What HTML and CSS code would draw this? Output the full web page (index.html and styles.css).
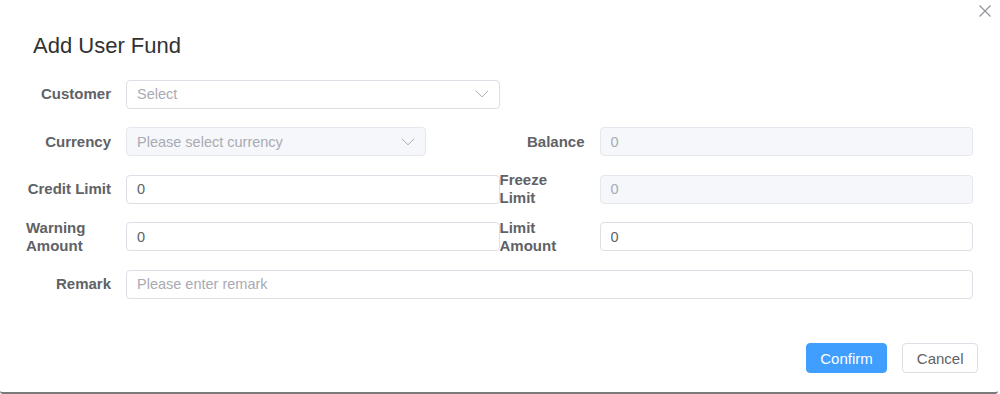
FILE: index.html
```html
<!DOCTYPE html>
<html lang="en">
<head>
    <meta charset="UTF-8">
    <meta name="viewport" content="width=device-width, initial-scale=1.0">
    <title>Add User Fund</title>
    <link rel="stylesheet" href="styles.css">
</head>
<body>

<div class="dialog">
    <div class="dialog-header">
        <span class="dialog-title">Add User Fund</span>
        <button type="button" class="dialog-close" aria-label="Close">
            <svg width="12" height="12" viewBox="0 0 12 12"><path d="M0.5 0.5 L11.5 11.5 M11.5 0.5 L0.5 11.5" stroke="#909399" stroke-width="1.2" fill="none"/></svg>
        </button>
    </div>

    <form class="dialog-body" id="fundForm">
        <!-- Customer -->
        <div class="form-row">
            <div class="form-item">
                <label class="form-label">Customer</label>
                <div class="form-control">
                    <div class="select">
                        <span class="placeholder">Select</span>
                        <svg class="arrow" width="14" height="8" viewBox="0 0 14 8"><path d="M0.8 0.8 L7 6.8 L13.2 0.8" stroke="#a8abb2" stroke-width="1" fill="none"/></svg>
                    </div>
                </div>
            </div>
            <div class="form-item"></div>
        </div>

        <!-- Currency / Balance -->
        <div class="form-row">
            <div class="form-item">
                <label class="form-label">Currency</label>
                <div class="form-control">
                    <div class="select disabled currency">
                        <span class="placeholder">Please select currency</span>
                        <svg class="arrow" width="14" height="8" viewBox="0 0 14 8"><path d="M0.8 0.8 L7 6.8 L13.2 0.8" stroke="#a8abb2" stroke-width="1" fill="none"/></svg>
                    </div>
                </div>
            </div>
            <div class="form-item">
                <label class="form-label">Balance</label>
                <div class="form-control">
                    <input type="text" class="input" value="0" disabled>
                </div>
            </div>
        </div>

        <!-- Credit Limit / Freeze Limit -->
        <div class="form-row">
            <div class="form-item">
                <label class="form-label">Credit Limit</label>
                <div class="form-control">
                    <input type="text" class="input" value="0">
                </div>
            </div>
            <div class="form-item">
                <label class="form-label">Freeze Limit</label>
                <div class="form-control">
                    <input type="text" class="input" value="0" disabled>
                </div>
            </div>
        </div>

        <!-- Warning Amount / Limit Amount -->
        <div class="form-row">
            <div class="form-item">
                <label class="form-label">Warning Amount</label>
                <div class="form-control">
                    <input type="text" class="input" value="0">
                </div>
            </div>
            <div class="form-item">
                <label class="form-label">Limit Amount</label>
                <div class="form-control">
                    <input type="text" class="input" value="0">
                </div>
            </div>
        </div>

        <!-- Remark -->
        <div class="form-row">
            <div class="form-item full">
                <label class="form-label">Remark</label>
                <div class="form-control">
                    <input type="text" class="input" placeholder="Please enter remark">
                </div>
            </div>
        </div>
    </form>

    <div class="dialog-footer">
        <button type="button" class="btn btn-primary">Confirm</button>
        <button type="button" class="btn">Cancel</button>
    </div>
</div>

</body>
</html>
```

FILE: styles.css
```css
body {
    margin: 0;
    font-family: "Liberation Sans", Arial, sans-serif;
    background-color: #ffffff;
}
.dialog {
    position: relative;
    width: 998px;
    height: 394px;
    box-sizing: border-box;
    background-color: #fff;
    border-bottom: 2px solid #7a7a7a;
    border-radius: 0 0 3px 3px;
}
.dialog-header {
    padding: 31px 33px 0;
    height: 30px;
}
.dialog-title {
    font-size: 22px;
    line-height: 30px;
    color: #303133;
}
.dialog-close {
    position: absolute;
    top: 5px;
    right: 7px;
    padding: 0;
    border: none;
    background: none;
    width: 12px;
    height: 12px;
    cursor: pointer;
}
.dialog-close svg {
    display: block;
}
.dialog-body {
    margin: 0;
    padding: 18.5px 25px 0 26px;
}
.form-row {
    display: flex;
    margin-bottom: 18.5px;
}
.form-item {
    display: flex;
    align-items: center;
    flex: 1;
    min-width: 0;
    height: 29px;
}
.form-label {
    display: flex;
    justify-content: flex-end;
    align-items: center;
    flex: 0 0 100px;
    height: 29px;
    box-sizing: border-box;
    padding-right: 15px;
    font-size: 15px;
    line-height: 18px;
    font-weight: bold;
    color: #606266;
}
.form-control {
    flex: 1;
    min-width: 0;
}
.input, .select {
    display: flex;
    align-items: center;
    width: 100%;
    height: 29px;
    box-sizing: border-box;
    padding: 0 10px;
    border: 1px solid #dcdfe6;
    border-radius: 4px;
    background-color: #fff;
    font-family: inherit;
    font-size: 14.5px;
    color: #606266;
    outline: none;
}
.input::placeholder, .placeholder {
    color: #a8abb2;
}
.input:disabled, .select.disabled {
    background-color: #f5f7fa;
    border-color: #e4e7ed;
    color: #a8abb2;
}
.select {
    justify-content: space-between;
}
.select.currency {
    width: 300px;
}
.dialog-footer {
    display: flex;
    justify-content: flex-end;
    gap: 15px;
    padding: 26px 20px 0 0;
}
.btn {
    height: 30px;
    padding: 0 13.5px;
    border: 1px solid #dcdfe6;
    border-radius: 4px;
    background-color: #fff;
    color: #606266;
    font-family: inherit;
    font-size: 15px;
    cursor: pointer;
}
.btn-primary {
    background-color: #409eff;
    border-color: #409eff;
    color: #fff;
}
```
